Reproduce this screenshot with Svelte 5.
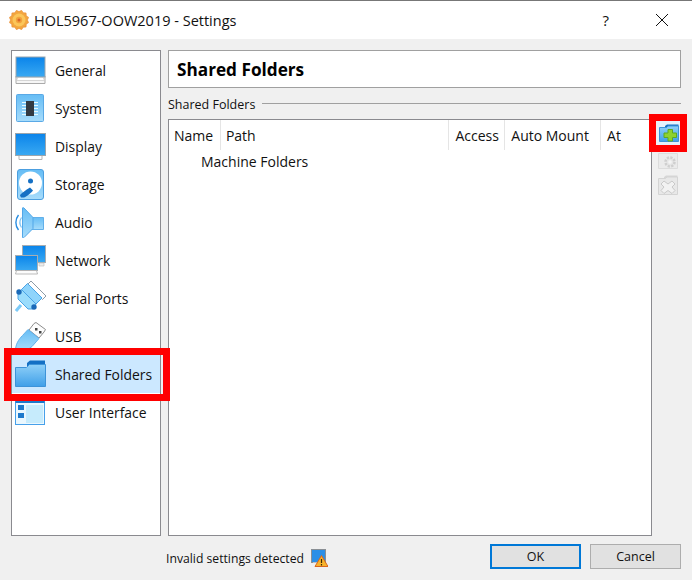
<script>
	const sections = [
		{ id: 'general', label: 'General' },
		{ id: 'system', label: 'System' },
		{ id: 'display', label: 'Display' },
		{ id: 'storage', label: 'Storage' },
		{ id: 'audio', label: 'Audio' },
		{ id: 'network', label: 'Network' },
		{ id: 'serial', label: 'Serial Ports' },
		{ id: 'usb', label: 'USB' },
		{ id: 'shared', label: 'Shared Folders', active: true },
		{ id: 'ui', label: 'User Interface' }
	];
	const columns = [
		{ label: 'Name', width: 52 },
		{ label: 'Path', width: 229 },
		{ label: 'Access', width: 56 },
		{ label: 'Auto Mount', width: 96 },
		{ label: 'At', width: 50 }
	];
	// gear outline for the title bar icon
	const gear = Array.from({ length: 24 }, (_, i) => {
		const r = i % 2 ? 10 : 8.4;
		const a = (i / 24) * Math.PI * 2;
		return `${(10 + r * Math.cos(a)).toFixed(2)},${(10 + r * Math.sin(a)).toFixed(2)}`;
	}).join(' ');
</script>

<div class="window">
	<header class="titlebar">
		<svg class="appicon" width="20" height="20" viewBox="0 0 20 20">
			<polygon points={gear} fill="#f3a63f" stroke="#e88a33" stroke-width=".6" stroke-linejoin="round"/>
			<circle cx="10" cy="10" r="6.500" fill="#fbc65a"/>
			<circle cx="10" cy="10" r="3.200" fill="#f2a23c"/>
			<circle cx="10" cy="10" r="1.500" fill="#d9652a"/>
		</svg>
		<span class="title">HOL5967-OOW2019 - Settings</span>
		<span class="help">?</span>
		<svg class="close" width="12" height="12" viewBox="0 0 12 12">
			<path d="M0 0L12 12M12 0L0 12" stroke="#111" stroke-width="1" fill="none"/>
		</svg>
	</header>

	<div class="body">
		<nav class="sidebar">
			{#each sections as s}
				<div class="item" class:active={s.active}>
					<span class="icon">
						{#if s.id === 'general'}
							<svg width="31" height="28" viewBox="0 0 31 28">
								<path d="M1 20h29v7.500H1z" fill="#f6f6f6" stroke="#aaa"/>
								<path d="M3 21h25l1.500 3.500h-28z" fill="#fff" stroke="#c4c4c4" stroke-width=".7"/>
								<rect x="1" y="1" width="29" height="20" fill="url(#blue)" stroke="#9aa5ad"/>
							</svg>
						{:else if s.id === 'system'}
							<svg width="30" height="30" viewBox="0 0 30 30">
								<rect x="1.500" y="1.500" width="27" height="27" rx="1" fill="url(#pale)" stroke="#5aa9e6"/>
								<path d="M7 9.500h16M7 12.500h16M7 15.500h16M7 18.500h16M7 21.500h16" stroke="#e8fbff" stroke-width="1.200"/>
								<rect x="11" y="8" width="8" height="15" fill="#333a42"/>
							</svg>
						{:else if s.id === 'display'}
							<svg width="31" height="27" viewBox="0 0 31 27">
								<path d="M4 22h23v4.500H4z" fill="#fff" stroke="#b5b5b5"/>
								<rect x=".500" y=".500" width="30" height="22" fill="url(#blue)" stroke="#9aa5ad"/>
							</svg>
						{:else if s.id === 'storage'}
							<svg width="30" height="31" viewBox="0 0 30 31">
								<rect x="2.500" y=".500" width="26" height="30" rx="2.500" fill="url(#pale)" stroke="#4c9fe0"/>
								<circle cx="15.500" cy="14" r="11.500" fill="#fff"/>
								<circle cx="15.500" cy="12" r="2.500" fill="#1570c4"/>
								<path d="M5 26.500c0-1.500 6-5.500 10-8l3 3c-2 2.500-6 6-9 7H6z" fill="#1570c4"/>
							</svg>
						{:else if s.id === 'audio'}
							<svg width="30" height="31" viewBox="0 0 30 31">
								<path d="M16 10.500h12.500v12H16z" fill="url(#pale)" stroke="#62b0ea"/>
								<path d="M7.500 1c0-.5 1-.5 1.500 0l9 9.500v11L9 30.500c-.5.500-1.500.5-1.500 0z" fill="url(#pale)" stroke="#52a7e8"/>
								<path d="M3.500 8c-3.500 4.500-3.500 10.500 0 15" fill="none" stroke="#2a8de0" stroke-width="1.400"/>
								<path d="M6.500 10.500c-2 3-2 7 0 10" fill="none" stroke="#7cc2f2" stroke-width="1.200"/>
							</svg>
						{:else if s.id === 'network'}
							<svg width="31" height="30" viewBox="0 0 31 30">
								<rect x="7.500" y=".500" width="23" height="17" fill="url(#blue)" stroke="#a7adb2"/>
								<path d="M24 18h5v3h-5z" fill="#ededed" stroke="#bbb" stroke-width=".6"/>
								<rect x=".500" y="10.500" width="22" height="15" fill="url(#blue)" stroke="#a7adb2"/>
								<path d="M1.500 25.500h20l1 3.500H.500z" fill="#fcfcfc" stroke="#aaa" stroke-width=".8"/>
							</svg>
						{:else if s.id === 'serial'}
							<svg width="32" height="36" viewBox="0 0 32 36">
								<path d="M16 1l15 15-3.500 3.500-15-15z" fill="#fff" stroke="#8c9aa5"/>
								<path d="M12.500 3.500L27 18 21 24 6.500 9.500z" fill="#8fd4fb" stroke="#4aa3e6"/>
								<path d="M6.500 9.500L21 24l-3 5h-5L3 19v-5z" fill="#9adcfc" stroke="#4aa3e6"/>
								<path d="M6 25l-5 6" stroke="#7ccaf8" stroke-width="3"/>
								<circle cx="4" cy="12" r="2.700" fill="#1a69b8"/>
								<circle cx="19" cy="27" r="2.700" fill="#1a69b8"/>
							</svg>
						{:else if s.id === 'usb'}
							<svg width="31" height="29" viewBox="0 0 31 29">
								<path d="M19 1.500l2-1 9.500 7-1.500 2.500-5 6-10-8z" fill="#fdfdfd" stroke="#8c8c8c"/>
								<rect x="20" y="6" width="2.500" height="2.500" fill="#444"/>
								<rect x="24" y="9" width="2.500" height="2.500" fill="#444"/>
								<path d="M13 7.500l11 9-7 8c-3 3-7 3.500-12 4H.500c0-6 3-11 7-15z" fill="url(#pale)" stroke="#62b2ec"/>
							</svg>
						{:else if s.id === 'shared'}
							<svg width="31" height="28" viewBox="0 0 31 28">
								<path d="M12 3l3-2.500h15v9H12z" fill="#1470c4"/>
								<path d="M.500 7.500h11l3-3h16v22H.500z" fill="url(#folder)" stroke="#3d93d8"/>
							</svg>
						{:else}
							<svg width="30" height="26" viewBox="0 0 30 26">
								<rect x=".500" y=".500" width="29" height="25" fill="#eaf7fe" stroke="#46a0ea"/>
								<rect x=".500" y=".500" width="29" height="3.500" fill="#1e79cb"/>
								<rect x="11" y="6" width="17" height="18" fill="#c6ebfc"/>
								<rect x="3" y="6" width="6" height="5" fill="#1e79cb"/>
								<rect x="3" y="14" width="6" height="5" fill="#1e79cb"/>
							</svg>
						{/if}
					</span>
					<span>{s.label}</span>
				</div>
			{/each}
		</nav>

		<main class="content">
			<div class="heading">Shared Folders</div>
			<div class="group">
				<span>Shared Folders</span>
				<i></i>
			</div>
			<div class="tablewrap">
				<div class="table">
					<div class="thead">
						{#each columns as c}
							<div class="th" style="width:{c.width}px">{c.label}</div>
						{/each}
					</div>
					<div class="row">Machine Folders</div>
				</div>
				<div class="tools">
					<span class="addbtn">
						<svg width="20" height="18" viewBox="0 0 20 18">
							<path d="M6 2l2-1.500h11.500v6H6z" fill="#1470c4"/>
							<path d="M.500 3.500h7l1.500-1.500h10.500v15.500H.500z" fill="url(#folder)" stroke="#3d93d8"/>
							<path d="M9 5.500h4.500V9h4v4.500h-4V17H9v-3.500H5V9h4z" fill="#8ed22e" stroke="#5ca81f"/>
						</svg>
					</span>
					<svg class="gearbtn" width="20" height="17" viewBox="0 0 20 17">
						<path d="M.500 1.500h19v15H.500z" fill="#ebebeb" stroke="#dcdcdc"/>
						<circle cx="12" cy="10" r="4.500" fill="#e6e6e6" stroke="#cfcfcf" stroke-width="2.500" stroke-dasharray="2.200 1.300"/>
						<circle cx="12" cy="10" r="1.800" fill="#f4f4f4"/>
					</svg>
					<svg width="20" height="20" viewBox="0 0 20 20">
						<path d="M6 2l2-1.500h11.500v6H6z" fill="#d6d6d6"/>
						<path d="M.500 3.500h7l1.500-1.500h10.500v17.500H.500z" fill="#e8e8e8" stroke="#d4d4d4"/>
						<path d="M6 6l4 3 4-3 3 3-3 3 3 3.500-3 3-4-3-4 3-3-3 3-3.500-3-3z" fill="#f2f2f2" stroke="#c9c9c9"/>
					</svg>
				</div>
			</div>
		</main>
	</div>

	<footer class="footer">
		<div class="status">
			<span>Invalid settings detected</span>
			<svg width="17" height="18" viewBox="0 0 17 18">
				<rect x=".500" y=".500" width="14" height="13" fill="#2c8fe6" stroke="#8a8f94"/>
				<path d="M2 13.500h10v2H2z" fill="#eee"/>
				<path d="M10.500 6.500L17 17.500H4z" fill="#f7b32b" stroke="#d9651c"/>
				<path d="M10.500 10v4M10.500 15v1.500" stroke="#3d2a08" stroke-width="1.200"/>
			</svg>
		</div>
		<div class="buttons">
			<button class="default">OK</button>
			<button>Cancel</button>
		</div>
	</footer>

	<div class="mark mark-side"></div>
	<div class="mark mark-add"></div>

	<svg class="defs" width="0" height="0">
		<defs>
			<linearGradient id="blue" x1="0" y1="0" x2="0" y2="1">
				<stop offset="0" stop-color="#0a84ea"/>
				<stop offset="1" stop-color="#3aa9f2"/>
			</linearGradient>
			<linearGradient id="pale" x1="0" y1="0" x2="0" y2="1">
				<stop offset="0" stop-color="#66bdf5"/>
				<stop offset="1" stop-color="#a7dcfb"/>
			</linearGradient>
			<linearGradient id="folder" x1="0" y1="0" x2="0" y2="1">
				<stop offset="0" stop-color="#8fd0f8"/>
				<stop offset="1" stop-color="#3f9fe8"/>
			</linearGradient>
		</defs>
	</svg>
</div>

<style>
	:global(body) {
		margin: 0;
		background: #f0f0f0;
	}

	.window {
		position: relative;
		width: 692px;
		height: 580px;
		overflow: hidden;
		display: flex;
		flex-direction: column;
		background: #f0f0f0;
		font-family: "Open Sans", "Noto Sans", sans-serif;
		font-size: 14px;
		color: #111;
	}

	.titlebar {
		height: 38px;
		flex: none;
		display: flex;
		align-items: center;
		padding: 0 24px 0 9px;
		background: #fff;
		border-top: 1px solid #777;
	}
	.appicon { margin-right: 5px; }
	.title { flex: 1; font-size: 14.500px; }
	.help { font-size: 15px; margin-right: 47px; }

	.body {
		flex: 1;
		display: flex;
		gap: 7px;
		padding: 11px 11px 0 11px;
		min-height: 0;
	}

	.sidebar {
		width: 148px;
		height: 484px;
		padding-top: 0;
		background: #fff;
		border: 1px solid #8a8a8f;
		font-size: 13.900px;
	}
	.item {
		height: 38px;
		display: flex;
		align-items: center;
		white-space: nowrap;
	}
	.item.active { background: #cce8ff; }
	.icon {
		width: 43px;
		flex: none;
		padding-left: 3px;
		box-sizing: border-box;
		display: flex;
		align-items: center;
	}

	.content {
		flex: 1;
		display: flex;
		flex-direction: column;
		height: 486px;
	}
	.heading {
		height: 36px;
		flex: none;
		line-height: 38px;
		padding-left: 8px;
		background: #fff;
		border: 1px solid #a0a0a0;
		font-weight: 700;
		font-size: 17.200px;
		color: #000;
	}
	.group {
		height: 31px;
		flex: none;
		display: flex;
		align-items: center;
		gap: 7px;
		font-size: 12.500px;
	}
	.group span { line-height: 17px; padding-top: 2px; }
	.group i {
		flex: 1;
		height: 1px;
		background: #a0a0a0;
	}

	.tablewrap {
		flex: 1;
		display: flex;
		min-height: 0;
	}
	.table {
		width: 482px;
		background: #fff;
		border: 1px solid #8a8a8f;
	}
	.thead {
		display: flex;
		height: 30px;
	}
	.th {
		box-sizing: border-box;
		padding-left: 5px;
		line-height: 32px;
		border-right: 1px solid #e5e5e5;
	}
	.th:nth-child(n+3) { padding-left: 6px; }
	.th:last-child { border-right: 0; }
	.row {
		padding-left: 32px;
		line-height: 24px;
	}

	.tools {
		display: flex;
		flex-direction: column;
		align-items: flex-start;
		flex: 1;
		padding: 2px 0 0 5px;
	}
	.tools svg { flex: none; display: block; }
	.addbtn {
		width: 23px;
		height: 24px;
		display: flex;
		align-items: center;
		justify-content: center;
		background: #e5f1fb;
	}
	.gearbtn {
		margin: 7px 0 6px 1px;
	}
	.tools > svg:last-child { margin-left: 1px; }

	.footer {
		height: 44px;
		flex: none;
		box-sizing: border-box;
		display: flex;
		align-items: center;
		justify-content: space-between;
		padding: 0 11px 3px 166px;
	}
	.status {
		display: flex;
		align-items: center;
		gap: 7px;
		margin-top: 3px;
		font-size: 12.200px;
	}
	.buttons {
		display: flex;
		gap: 9px;
	}
	button {
		width: 91px;
		height: 25px;
		padding: 0;
		background: #e1e1e1;
		border: 1px solid #adadad;
		font-family: inherit;
		font-size: 12.500px;
		color: #111;
	}
	button.default { border: 2px solid #0078d7; }

	.mark {
		position: absolute;
		box-sizing: border-box;
		border: 7px solid #f00;
		pointer-events: none;
	}
	.mark-side {
		left: 4px;
		top: 348px;
		width: 166px;
		height: 53px;
	}
	.mark-add {
		left: 649px;
		top: 114px;
		width: 38px;
		height: 38px;
	}
	.defs { position: absolute; }
</style>
